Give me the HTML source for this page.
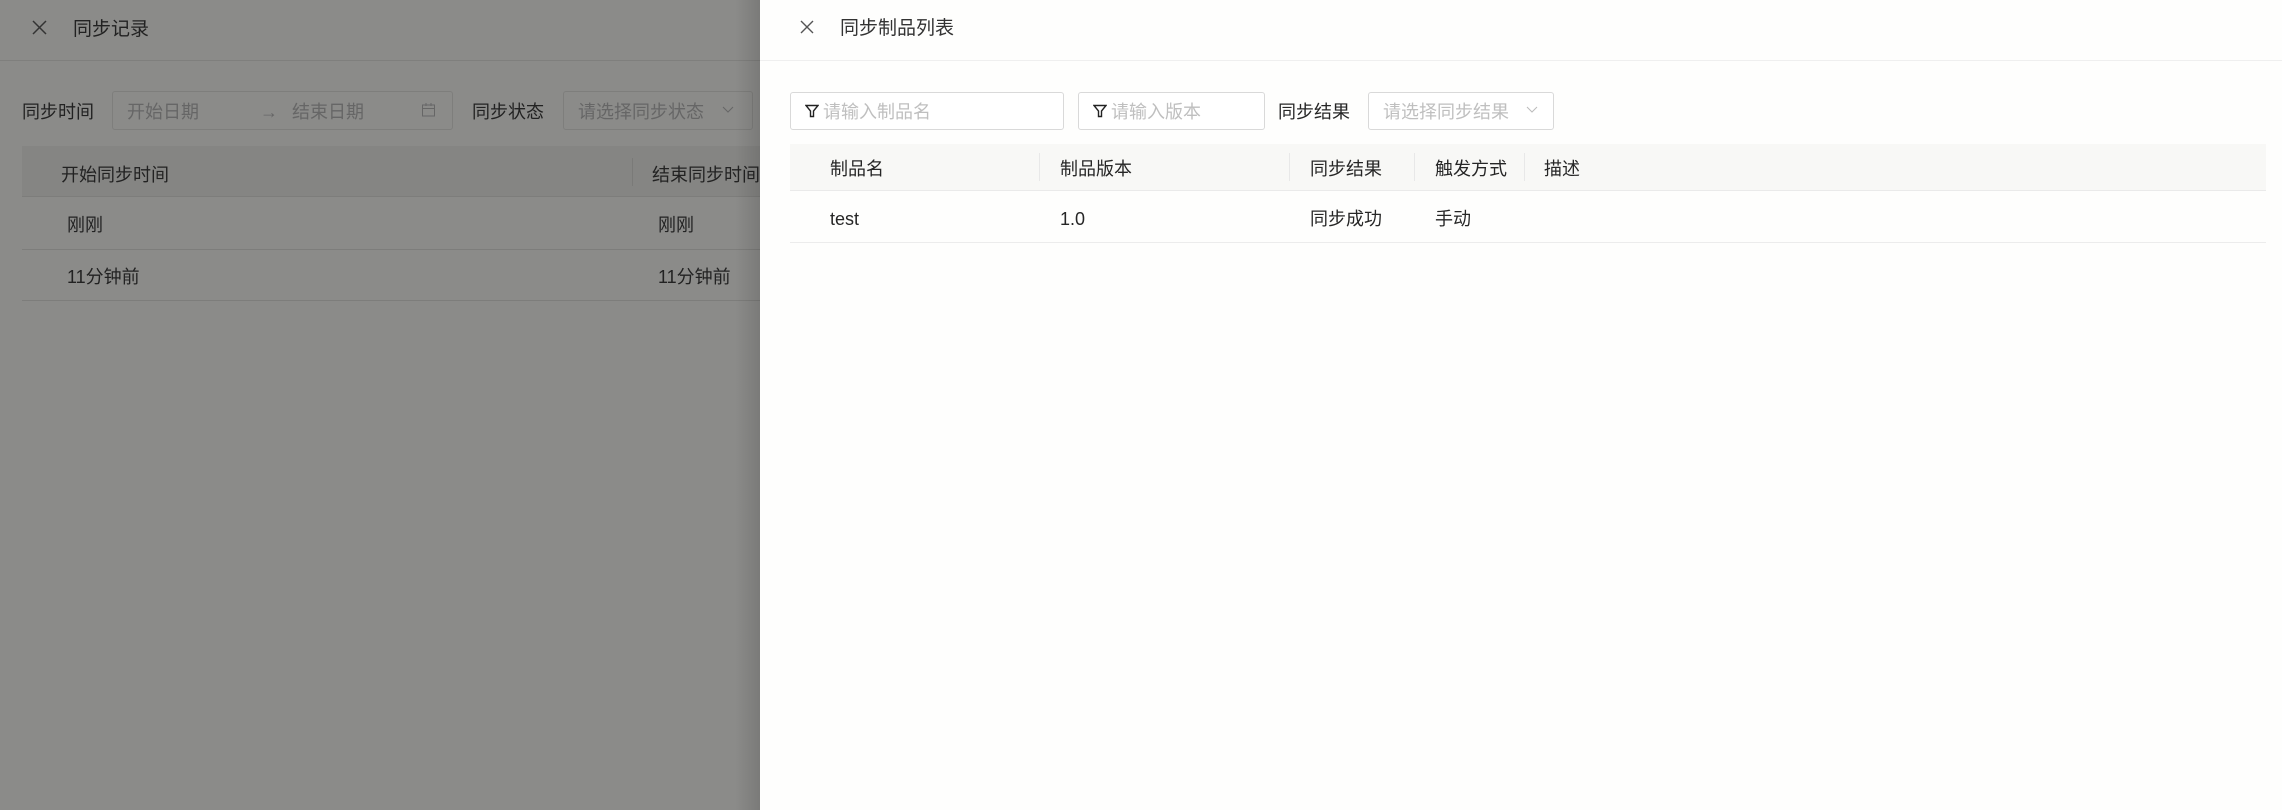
<!DOCTYPE html>
<html><head><meta charset="utf-8"><style>
*{box-sizing:border-box;margin:0;padding:0}
body{width:2282px;height:810px;overflow:hidden;position:relative;background:#fff;font-family:"Liberation Sans","Noto Sans CJK SC",sans-serif;font-size:18px;line-height:24px;color:#262626}
.ab{position:absolute;white-space:nowrap}
#left{position:absolute;left:0;top:0;width:760px;height:810px;background:#8b8b89}
#shadow{position:absolute;left:735px;top:0;width:25px;height:810px;background:linear-gradient(to right,rgba(0,0,0,0),rgba(0,0,0,0.12))}
#right{position:absolute;left:760px;top:0;width:1522px;height:810px;background:#fefefd}
.ldark{color:#222}
.inp{position:absolute;border:1px solid #7e7e7c;border-radius:3px}
.rinp{position:absolute;border:1px solid #d9d9d9;border-radius:3px;background:#fff}
.ph{color:#bfbfbf}
</style></head><body>
<div id="left">
  <svg class="ab" style="left:32px;top:20px" width="15" height="15" viewBox="0 0 15 15"><path d="M1 1L14 14M14 1L1 14" stroke="#333" stroke-width="1.5"/></svg>
  <div class="ab ldark" style="left:73px;top:18px;font-size:19px">同步记录</div>
  <div class="ab" style="left:0;top:60px;width:760px;height:1px;background:#7f7f7d"></div>
  <div class="ab ldark" style="left:22px;top:100px">同步时间</div>
  <div class="inp" style="left:112px;top:91px;width:341px;height:39px"></div>
  <div class="ab" style="left:127px;top:100px;color:#666">开始日期</div>
  <div class="ab" style="left:260px;top:100px;color:#666">→</div>
  <div class="ab" style="left:292px;top:100px;color:#666">结束日期</div>
  <svg class="ab" style="left:421px;top:102px" width="15" height="15" viewBox="0 0 15 15"><rect x="1.5" y="3" width="12" height="11" fill="none" stroke="#666"/><path d="M1.5 6.5H13.5M5 1V4M10 1V4" stroke="#666"/></svg>
  <div class="ab ldark" style="left:472px;top:100px">同步状态</div>
  <div class="inp" style="left:563px;top:91px;width:190px;height:39px"></div>
  <div class="ab" style="left:578px;top:100px;color:#666">请选择同步状态</div>
  <svg class="ab" style="left:722px;top:106px" width="12" height="8" viewBox="0 0 12 8"><path d="M1 1L6 6L11 1" fill="none" stroke="#666"/></svg>
  <div class="ab" style="left:22px;top:146px;width:738px;height:51px;background:#858583;border-bottom:1px solid #7d7d7b"></div>
  <div class="ab" style="left:632px;top:158px;width:1px;height:28px;background:#7a7a78"></div>
  <div class="ab ldark" style="left:61px;top:163px">开始同步时间</div>
  <div class="ab ldark" style="left:652px;top:163px">结束同步时间</div>
  <div class="ab ldark" style="left:67px;top:213px">刚刚</div>
  <div class="ab ldark" style="left:658px;top:213px">刚刚</div>
  <div class="ab" style="left:22px;top:249px;width:738px;height:1px;background:#7d7d7b"></div>
  <div class="ab ldark" style="left:67px;top:265px">11分钟前</div>
  <div class="ab ldark" style="left:658px;top:265px">11分钟前</div>
  <div class="ab" style="left:22px;top:300px;width:738px;height:1px;background:#7d7d7b"></div>
  <div id="shadow"></div>
</div>
<div id="right">
  <svg class="ab" style="left:40px;top:20px" width="14" height="14" viewBox="0 0 14 14"><path d="M1 1L13 13M13 1L1 13" stroke="#555" stroke-width="1.4"/></svg>
  <div class="ab" style="left:80px;top:17px;font-size:19px;color:#333">同步制品列表</div>
  <div class="ab" style="left:0;top:60px;width:1522px;height:1px;background:#efefef"></div>
  <div class="rinp" style="left:30px;top:92px;width:274px;height:38px"></div>
  <svg class="ab" style="left:45px;top:104px" width="14" height="14" viewBox="0 0 14 14"><path d="M1 1.5H13L8.5 7V12.5H5.5V7Z" fill="none" stroke="#222" stroke-width="1.4"/></svg>
  <div class="ab ph" style="left:63px;top:100px">请输入制品名</div>
  <div class="rinp" style="left:318px;top:92px;width:187px;height:38px"></div>
  <svg class="ab" style="left:333px;top:104px" width="14" height="14" viewBox="0 0 14 14"><path d="M1 1.5H13L8.5 7V12.5H5.5V7Z" fill="none" stroke="#222" stroke-width="1.4"/></svg>
  <div class="ab ph" style="left:351px;top:100px">请输入版本</div>
  <div class="ab" style="left:518px;top:100px">同步结果</div>
  <div class="rinp" style="left:608px;top:92px;width:186px;height:38px"></div>
  <div class="ab ph" style="left:623px;top:100px">请选择同步结果</div>
  <svg class="ab" style="left:766px;top:106px" width="12" height="8" viewBox="0 0 12 8"><path d="M1 1L6 6L11 1" fill="none" stroke="#bbb"/></svg>
  <div class="ab" style="left:30px;top:144px;width:1476px;height:47px;background:#f8f8f6;border-bottom:1px solid #eaeaea"></div>
  <div class="ab" style="left:279px;top:153px;width:1px;height:28px;background:#e8e8e8"></div>
  <div class="ab" style="left:529px;top:153px;width:1px;height:28px;background:#e8e8e8"></div>
  <div class="ab" style="left:654px;top:153px;width:1px;height:28px;background:#e8e8e8"></div>
  <div class="ab" style="left:764px;top:153px;width:1px;height:28px;background:#e8e8e8"></div>
  <div class="ab" style="left:70px;top:157px">制品名</div>
  <div class="ab" style="left:300px;top:157px">制品版本</div>
  <div class="ab" style="left:550px;top:157px">同步结果</div>
  <div class="ab" style="left:675px;top:157px">触发方式</div>
  <div class="ab" style="left:784px;top:157px">描述</div>
  <div class="ab" style="left:70px;top:207px">test</div>
  <div class="ab" style="left:300px;top:207px">1.0</div>
  <div class="ab" style="left:550px;top:207px">同步成功</div>
  <div class="ab" style="left:675px;top:207px">手动</div>
  <div class="ab" style="left:30px;top:242px;width:1476px;height:1px;background:#ececec"></div>
</div>
</body></html>
